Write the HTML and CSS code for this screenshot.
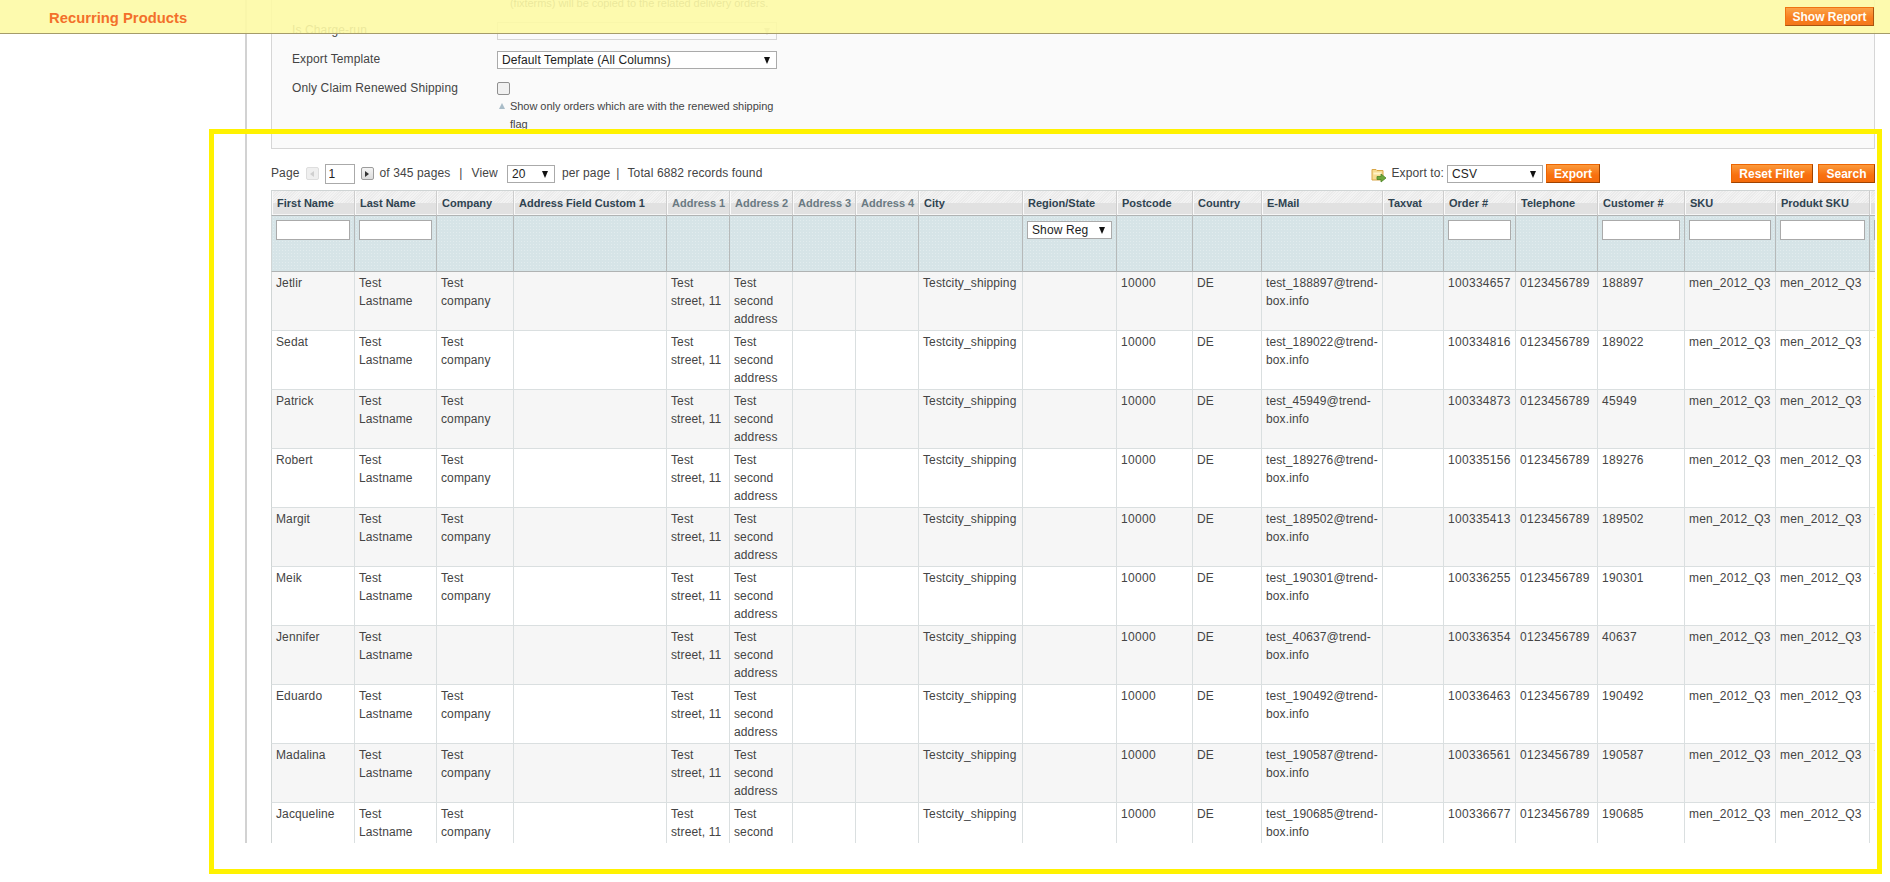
FILE: index.html
```html
<!DOCTYPE html>
<html lang="en">
<head>
<meta charset="utf-8">
<title>Recurring Products</title>
<link rel="stylesheet" href="styles.css">
</head>
<body>
<div class="page">
  <aside class="sidebar"></aside>
  <main class="main">
    <section class="panel">
      <p class="note note-first">(fixterms) will be copied to the related delivery orders.</p>
      <div class="form-row row-gap-first">
        <label class="form-label">Is Charge-run</label>
        <div class="select select-form"><select disabled><option></option></select></div>
      </div>
      <div class="form-row">
        <label class="form-label">Export Template</label>
        <div class="select select-form"><select><option>Default Template (All Columns)</option></select></div>
      </div>
      <div class="form-row">
        <label class="form-label">Only Claim Renewed Shipping</label>
        <div class="form-value">
          <input class="check" type="checkbox">
          <p class="note note-hint">Show only orders which are with the renewed shipping flag</p>
        </div>
      </div>
    </section>

    <div class="pager">
      <span>Page</span>
      <span class="arrow-btn arrow-prev"></span>
      <input class="page-input" type="text" value="1">
      <span class="arrow-btn arrow-next"></span>
      <span>of 345 pages</span>
      <span class="sep sep-first">|</span>
      <span>View</span>
      <div class="select select-view"><select><option>20</option></select></div>
      <span>per page</span>
      <span class="sep sep-second">|</span>
      <span>Total 6882 records found</span>
      <div class="export">
        <svg class="export-icon" width="16" height="16" viewBox="0 0 16 16">
          <path d="M1 2.500h4l1 1h6v9.500H1z" fill="#f6dc92" stroke="#d8a648"/>
          <path d="M2.500 5.500h8v2h-8z" fill="#fff4c8"/>
          <path d="M6 9.500h4V7l5 4-5 4v-2.500H6z" fill="#6ea83c" stroke="#4a8426" stroke-width=".8"/>
        </svg>
        <span class="export-label">Export to:</span>
        <div class="select select-export"><select><option>CSV</option></select></div>
        <button class="btn btn-export" type="button">Export</button>
      </div>
      <button class="btn btn-reset" type="button">Reset Filter</button>
      <button class="btn btn-search" type="button">Search</button>
    </div>

    <div class="grid">
      <table>
        <colgroup>
          <col class="c84"><col class="c82"><col class="c77"><col class="c153"><col class="c63"><col class="c63"><col class="c63"><col class="c63"><col class="c104"><col class="c94"><col class="c76"><col class="c69"><col class="c121"><col class="c61"><col class="c72"><col class="c82"><col class="c87"><col class="c91"><col class="c94"><col class="c80">
        </colgroup>
        <thead>
          <tr class="headings">
            <th>First Name</th><th>Last Name</th><th>Company</th><th>Address Field Custom 1</th><th class="muted">Address 1</th><th class="muted">Address 2</th><th class="muted">Address 3</th><th class="muted">Address 4</th><th>City</th><th>Region/State</th><th>Postcode</th><th>Country</th><th>E-Mail</th><th>Taxvat</th><th>Order #</th><th>Telephone</th><th>Customer #</th><th>SKU</th><th>Produkt SKU</th><th></th>
          </tr>
          <tr class="filter">
            <th><input type="text"></th><th><input type="text"></th><th></th><th></th><th></th><th></th><th></th><th></th><th></th>
            <th><div class="select select-region"><select><option>Show Reg</option></select></div></th>
            <th></th><th></th><th></th><th></th><th><input type="text"></th><th></th><th><input type="text"></th><th><input type="text"></th><th><input type="text"></th><th><input type="text"></th>
          </tr>
        </thead>
        <tbody>
          <tr><td>Jetlir</td><td>Test Lastname</td><td>Test company</td><td></td><td>Test street, 11</td><td>Test second address</td><td></td><td></td><td>Testcity_shipping</td><td></td><td>10000</td><td>DE</td><td>test_188897@trend-box.info</td><td></td><td>100334657</td><td>0123456789</td><td>188897</td><td>men_2012_Q3</td><td>men_2012_Q3</td><td class="tail">Test</td></tr>
          <tr><td>Sedat</td><td>Test Lastname</td><td>Test company</td><td></td><td>Test street, 11</td><td>Test second address</td><td></td><td></td><td>Testcity_shipping</td><td></td><td>10000</td><td>DE</td><td>test_189022@trend-box.info</td><td></td><td>100334816</td><td>0123456789</td><td>189022</td><td>men_2012_Q3</td><td>men_2012_Q3</td><td class="tail">Test</td></tr>
          <tr><td>Patrick</td><td>Test Lastname</td><td>Test company</td><td></td><td>Test street, 11</td><td>Test second address</td><td></td><td></td><td>Testcity_shipping</td><td></td><td>10000</td><td>DE</td><td>test_45949@trend-box.info</td><td></td><td>100334873</td><td>0123456789</td><td>45949</td><td>men_2012_Q3</td><td>men_2012_Q3</td><td class="tail">Test</td></tr>
          <tr><td>Robert</td><td>Test Lastname</td><td>Test company</td><td></td><td>Test street, 11</td><td>Test second address</td><td></td><td></td><td>Testcity_shipping</td><td></td><td>10000</td><td>DE</td><td>test_189276@trend-box.info</td><td></td><td>100335156</td><td>0123456789</td><td>189276</td><td>men_2012_Q3</td><td>men_2012_Q3</td><td class="tail">Test</td></tr>
          <tr><td>Margit</td><td>Test Lastname</td><td>Test company</td><td></td><td>Test street, 11</td><td>Test second address</td><td></td><td></td><td>Testcity_shipping</td><td></td><td>10000</td><td>DE</td><td>test_189502@trend-box.info</td><td></td><td>100335413</td><td>0123456789</td><td>189502</td><td>men_2012_Q3</td><td>men_2012_Q3</td><td class="tail">Test</td></tr>
          <tr><td>Meik</td><td>Test Lastname</td><td>Test company</td><td></td><td>Test street, 11</td><td>Test second address</td><td></td><td></td><td>Testcity_shipping</td><td></td><td>10000</td><td>DE</td><td>test_190301@trend-box.info</td><td></td><td>100336255</td><td>0123456789</td><td>190301</td><td>men_2012_Q3</td><td>men_2012_Q3</td><td class="tail">Test</td></tr>
          <tr><td>Jennifer</td><td>Test Lastname</td><td></td><td></td><td>Test street, 11</td><td>Test second address</td><td></td><td></td><td>Testcity_shipping</td><td></td><td>10000</td><td>DE</td><td>test_40637@trend-box.info</td><td></td><td>100336354</td><td>0123456789</td><td>40637</td><td>men_2012_Q3</td><td>men_2012_Q3</td><td class="tail">Test</td></tr>
          <tr><td>Eduardo</td><td>Test Lastname</td><td>Test company</td><td></td><td>Test street, 11</td><td>Test second address</td><td></td><td></td><td>Testcity_shipping</td><td></td><td>10000</td><td>DE</td><td>test_190492@trend-box.info</td><td></td><td>100336463</td><td>0123456789</td><td>190492</td><td>men_2012_Q3</td><td>men_2012_Q3</td><td class="tail">Test</td></tr>
          <tr><td>Madalina</td><td>Test Lastname</td><td>Test company</td><td></td><td>Test street, 11</td><td>Test second address</td><td></td><td></td><td>Testcity_shipping</td><td></td><td>10000</td><td>DE</td><td>test_190587@trend-box.info</td><td></td><td>100336561</td><td>0123456789</td><td>190587</td><td>men_2012_Q3</td><td>men_2012_Q3</td><td class="tail">Test</td></tr>
          <tr><td>Jacqueline</td><td>Test Lastname</td><td>Test company</td><td></td><td>Test street, 11</td><td>Test second address</td><td></td><td></td><td>Testcity_shipping</td><td></td><td>10000</td><td>DE</td><td>test_190685@trend-box.info</td><td></td><td>100336677</td><td>0123456789</td><td>190685</td><td>men_2012_Q3</td><td>men_2012_Q3</td><td class="tail">Test</td></tr>
        </tbody>
      </table>
    </div>
  </main>
</div>

<header class="topbar">
  <span class="topbar-title">Recurring Products</span>
  <button class="btn btn-report" type="button">Show Report</button>
</header>

<div class="highlight"></div>
</body>
</html>
```

FILE: styles.css
```css
* { box-sizing: border-box; }

html, body {
  margin: 0;
  padding: 0;
  height: 882px;
  overflow: hidden;
  background: #fff;
}

body {
  position: relative;
  font: 12px/18px "Liberation Sans", Arial, sans-serif;
  letter-spacing: 0.12px;
  color: #444;
}

p { margin: 0; }

.page {
  display: flex;
  height: 843px;
  overflow: hidden;
}

.sidebar {
  flex: 0 0 245px;
}

.main {
  flex: 1 1 auto;
  min-width: 0;
  padding: 0 15px 0 24px;
  border-left: 2px solid #d2d2d2;
}

/* Form panel */
.panel {
  display: flow-root;
  height: 149px;
  padding: 0 0 0 20px;
  background: #fafafa;
  border: 1px solid #d6d6d6;
  border-top: 0;
}

.form-row {
  display: flex;
  margin-top: 10px;
}

.row-gap-first { margin-top: 9px; }

.form-label {
  flex: 0 0 205px;
  line-height: 18px;
}

.form-value {
  width: 280px;
}

.note {
  font-size: 11px;
  line-height: 18px;
  letter-spacing: -0.04px;
}

.note-first {
  margin: -6px 0 0 218px;
  height: 18px;
  white-space: nowrap;
}

.note-hint {
  position: relative;
  margin-top: 2px;
  padding-left: 13px;
  width: 280px;
}

.note-hint::before {
  content: "";
  position: absolute;
  left: 2px;
  top: 6px;
  border-left: 3.500px solid transparent;
  border-right: 3.500px solid transparent;
  border-bottom: 6px solid #a9bcc8;
}

.check {
  display: block;
  width: 13px;
  height: 13px;
  margin: 3px 0 0;
  appearance: none;
  background: #f0f0f0;
  border: 1px solid #8f8f8f;
  border-radius: 2px;
}

/* Selects */
.select {
  position: relative;
  display: block;
  flex: none;
  height: 18px;
}

.select select {
  display: block;
  width: 100%;
  height: 18px;
  margin: 0;
  padding: 0 0 0 4px;
  appearance: none;
  border: 1px solid #aaa;
  border-radius: 0;
  background: #fff;
  font: 12px/16px "Liberation Sans", Arial, sans-serif;
  letter-spacing: 0.12px;
  color: #222;
}

.select::after {
  content: "";
  position: absolute;
  right: 7px;
  top: 6px;
  border-left: 3.500px solid transparent;
  border-right: 3.500px solid transparent;
  border-top: 7px solid #111;
}

.select select:disabled {
  border-color: #c6c6c6;
  background: #fafafa;
}

.select:has(select:disabled)::after {
  border-top-color: #bbb;
}

.select-form {
  width: 280px;
  margin-top: 1px;
}

.select-view {
  width: 48px;
  margin: 1px 1px 0 3px;
}

.select-export {
  width: 96px;
  margin: 1px 3px 0 0;
}

.select-region {
  width: 85px;
  margin-top: 1px;
}

/* Pager */
.pager {
  display: flex;
  align-items: flex-start;
  gap: 6px;
  height: 20px;
  margin: 15px 0 6px;
  line-height: 18px;
}

.sep-first {
  margin: 0 3px;
}

.sep-second {
  margin: 0 2px 0 0;
}

.arrow-btn {
  display: flex;
  align-items: center;
  justify-content: center;
  width: 13px;
  height: 13px;
  margin-top: 3px;
  border-radius: 2px;
  flex: none;
}

.arrow-btn::before {
  content: "";
  border-top: 3px solid transparent;
  border-bottom: 3px solid transparent;
}

.arrow-prev {
  background: #efefef;
  border: 1px solid #dedede;
}

.arrow-prev::before {
  border-right: 4px solid #cfcfcf;
}

.arrow-next {
  background: linear-gradient(#f4f4f4, #dcdcdc);
  border: 1px solid #9c9c9c;
}

.arrow-next::before {
  border-left: 4px solid #333;
}

.page-input {
  width: 30px;
  height: 20px;
  margin: 0;
  padding: 0 3px;
  border: 1px solid #aaa;
  border-radius: 0;
  font: 12px "Liberation Sans", Arial, sans-serif;
  color: #222;
}

.export {
  display: flex;
  align-items: flex-start;
  margin: 0 125px 0 auto;
}

.export-icon {
  margin: 3px 4px 0 0;
}

.export-label {
  margin-right: 3px;
  white-space: nowrap;
}

/* Buttons */
.btn {
  flex: none;
  height: 19px;
  padding: 0;
  border: 1px solid;
  border-color: #ed6502 #a04300 #a04300 #ed6502;
  background: linear-gradient(#fb9a3c, #f8700f 60%, #f46b0c);
  color: #fff;
  font: bold 12px/16px "Liberation Sans", Arial, sans-serif;
  white-space: nowrap;
}

.btn-export { width: 54px; }
.btn-reset { width: 82px; }
.btn-search { width: 57px; margin-left: -1px; }

/* Grid */
.grid {
  overflow: hidden;
}

table {
  width: 1679px;
  table-layout: fixed;
  border-collapse: separate;
  border-spacing: 0;
}

.c61 { width: 61px; }
.c63 { width: 63px; }
.c69 { width: 69px; }
.c72 { width: 72px; }
.c76 { width: 76px; }
.c77 { width: 77px; }
.c80 { width: 80px; }
.c82 { width: 82px; }
.c84 { width: 84px; }
.c87 { width: 87px; }
.c91 { width: 91px; }
.c94 { width: 94px; }
.c104 { width: 104px; }
.c121 { width: 121px; }
.c153 { width: 153px; }

.headings th {
  height: 26px;
  padding: 0 4px 0 5px;
  border-top: 1px solid #cfd4d4;
  border-right: 1px solid #cdcdcd;
  border-bottom: 1px solid #b0b3b3;
  background:
    repeating-linear-gradient(135deg, #ebebeb 0 1px, #f3f3f3 1px 2px) top / 100% 12px no-repeat,
    #e1e1e1;
  box-shadow: inset 1px 0 #fafafa, inset 0 -1px #f6f6f6;
  color: #2f4350;
  font: bold 11px/16px "Liberation Sans", Arial, sans-serif;
  letter-spacing: 0;
  text-align: left;
  white-space: nowrap;
  overflow: hidden;
}

.headings th.muted {
  color: #6a7a82;
}

.headings th:first-child,
.filter th:first-child,
tbody td:first-child {
  border-left: 1px solid #d0d5d5;
}

.filter th {
  height: 56px;
  padding: 4px;
  vertical-align: top;
  border-right: 1px solid #b6b9b9;
  border-bottom: 1px solid #b0b3b3;
  background-color: #d6e4e7;
  background-image: radial-gradient(circle, #e2ecee 0.8px, transparent 1px);
  background-size: 3px 3px;
}

.filter input {
  display: block;
  width: 100%;
  height: 20px;
  margin: 0;
  padding: 0 3px;
  border: 1px solid #aaa;
  border-radius: 0;
  background: #fff;
}

tbody td {
  height: 59px;
  padding: 2px 4px;
  vertical-align: top;
  border-right: 1px solid #dadfe0;
  border-bottom: 1px solid #dadfe0;
  color: #444;
  background: #fff;
}

tbody tr:nth-child(odd) td {
  background: #f6f6f6;
}

tbody td:nth-child(11),
tbody td:nth-child(15),
tbody td:nth-child(16),
tbody td:nth-child(17) {
  letter-spacing: 0.3px;
}

tbody td:nth-child(18),
tbody td:nth-child(19) {
  letter-spacing: 0.2px;
}

tbody td.tail {
  color: #f0dcb0;
  white-space: nowrap;
}

/* Floating bar */
.topbar {
  position: absolute;
  left: 0;
  top: 0;
  width: 100%;
  height: 34px;
  display: flex;
  align-items: flex-start;
  justify-content: space-between;
  padding: 7px 16px 0 49px;
  background: rgba(253, 249, 165, 0.9);
  border-bottom: 1px solid #a59c6a;
}

.topbar-title {
  color: #f3702a;
  font: bold 14.800px/22px "Liberation Sans", Arial, sans-serif;
  letter-spacing: 0;
}

.btn-report {
  width: 89px;
  opacity: 0.9;
}

/* Review highlight */
.highlight {
  position: absolute;
  left: 209px;
  top: 129px;
  width: 1673px;
  height: 745px;
  border: 5px solid #fff200;
  pointer-events: none;
}
```
